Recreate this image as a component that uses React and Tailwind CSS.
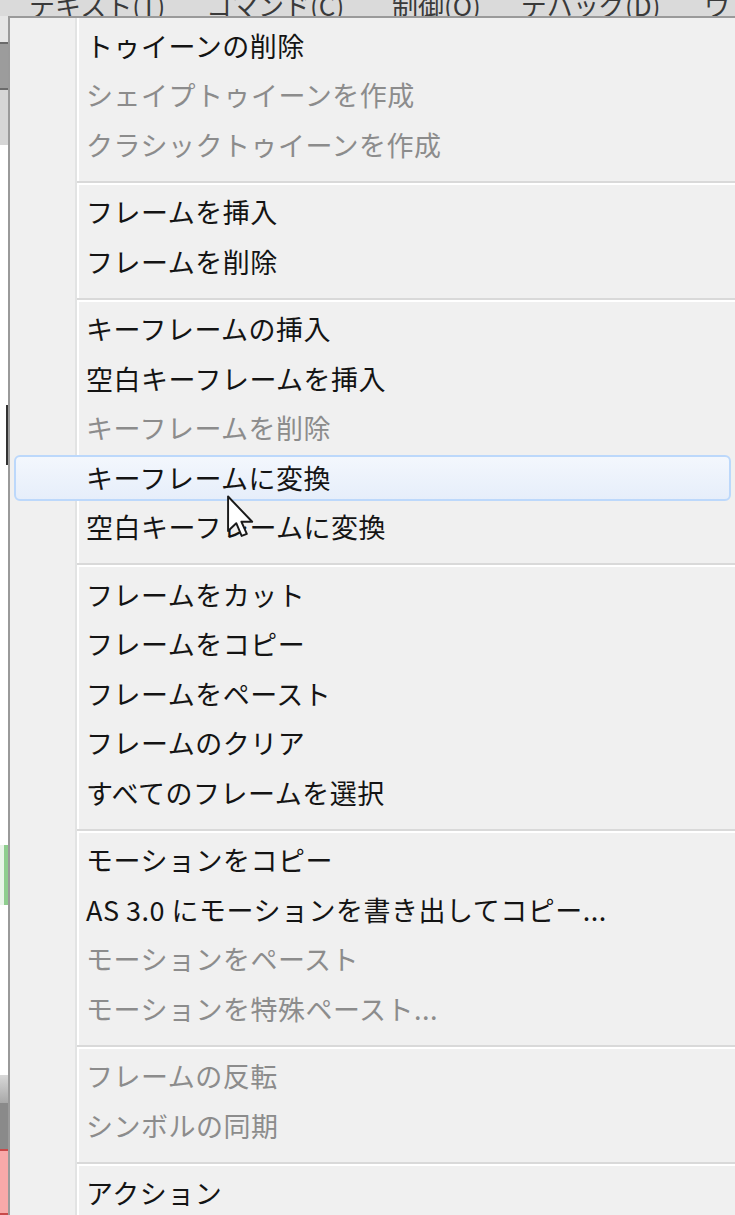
const groups = [
  [
    { label: "トゥイーンの削除" },
    { label: "シェイプトゥイーンを作成", disabled: true },
    { label: "クラシックトゥイーンを作成", disabled: true },
  ],
  [{ label: "フレームを挿入" }, { label: "フレームを削除" }],
  [
    { label: "キーフレームの挿入" },
    { label: "空白キーフレームを挿入" },
    { label: "キーフレームを削除", disabled: true },
    { label: "キーフレームに変換", active: true },
    { label: "空白キーフレームに変換" },
  ],
  [
    { label: "フレームをカット" },
    { label: "フレームをコピー" },
    { label: "フレームをペースト" },
    { label: "フレームのクリア" },
    { label: "すべてのフレームを選択" },
  ],
  [
    { label: "モーションをコピー" },
    { label: "AS 3.0 にモーションを書き出してコピー..." },
    { label: "モーションをペースト", disabled: true },
    { label: "モーションを特殊ペースト...", disabled: true },
  ],
  [
    { label: "フレームの反転", disabled: true },
    { label: "シンボルの同期", disabled: true },
  ],
  [{ label: "アクション" }],
];

const menuBar = [
  { label: "テキスト(T)", w: "w-[177px]" },
  { label: "コマンド(C)", w: "w-[186px]" },
  { label: "制御(O)", w: "w-[129px]" },
  { label: "デバッグ(D)", w: "w-[183px]" },
  { label: "ウ", w: "w-[40px]" },
];

function MenuItem({ item }) {
  return (
    <div className="h-[49.5px] px-[4px] py-[2px]">
      <div
        className={`h-full flex items-center pl-[70px] rounded-[6px] border-2 ${
          item.active
            ? "border-[#bcd8fb] bg-[linear-gradient(to_bottom,#f3f7fd,#e6eefa)]"
            : "border-transparent"
        } ${item.disabled ? "text-[#8c8c8c]" : "text-[#141414]"}`}
      >
        <span className="whitespace-nowrap">{item.label}</span>
      </div>
    </div>
  );
}

function Separator() {
  return (
    <div className="h-[18px] flex flex-col pt-[11px] pl-[67px]">
      <div className="h-[2px] bg-[#d9d9d9]" />
      <div className="h-[2px] bg-white" />
    </div>
  );
}

function Cursor() {
  return (
    <svg
      className="absolute left-[227px] top-[495px]"
      width="28"
      height="44"
      viewBox="0 0 13 20"
    >
      <path
        d="M0.5 0.5 L0.5 16.5 L4.3 12.9 L6.8 18.8 L9.2 17.8 L6.7 12.2 L11.7 12.2 Z"
        fill="#ffffff"
        stroke="#1a1a1a"
        strokeWidth="0.9"
        strokeLinejoin="round"
      />
    </svg>
  );
}

export default function App() {
  return (
    <div
      className="w-[735px] h-[1215px] overflow-hidden relative flex flex-col bg-[#f0f0f0]"
      style={{ fontFamily: '"Noto Sans CJK JP", "Noto Sans", sans-serif' }}
    >
      {/* menu bar, only its lower part shows */}
      <div className="h-[16px] shrink-0 bg-[#dadada] overflow-hidden flex items-end pl-[29px]">
        {menuBar.map((m) => (
          <div
            key={m.label}
            className={`${m.w} shrink-0 text-[26px] leading-[26px] text-[#3a3a3a] whitespace-nowrap mb-[-2px]`}
          >
            {m.label}
          </div>
        ))}
      </div>

      <div className="flex flex-1 min-h-0">
        {/* strip of the window behind the menu */}
        <div className="w-[8px] shrink-0 flex flex-col">
          <div className="h-[26px] bg-[#e6e6e6]" />
          <div className="h-[48px] bg-[#9c9c9c] border-y-2 border-[#6a6a6a]" />
          <div className="h-[55px] bg-[#d6d6d6]" />
          <div className="h-[260px] bg-white" />
          <div className="h-[60px] bg-white border-r-2 border-[#333]" />
          <div className="h-[380px] bg-white" />
          <div className="h-[60px] bg-[#e9f5e9] border-r-4 border-[#8fce8f]" />
          <div className="h-[170px] bg-white" />
          <div className="h-[28px] bg-[linear-gradient(to_bottom,#d8d8d8,#a8a8a8)]" />
          <div className="h-[46px] bg-[#8a8a8a]" />
          <div className="flex-1 bg-[#f8a9a9] border-y-2 border-[#c84a4a]" />
        </div>

        {/* context menu */}
        <div className="flex-1 border-l-2 border-t-2 border-[#9a9a9a] pt-[3px] text-[27px] tracking-[0.5px] bg-[linear-gradient(to_right,#f0f0f0_65px,#e2e3e3_65px,#e2e3e3_67px,#ffffff_67px,#ffffff_69px,#f0f0f0_69px)]">
          {groups.map((g, gi) => (
            <div key={gi}>
              {gi > 0 && <Separator />}
              {g.map((item) => (
                <MenuItem key={item.label} item={item} />
              ))}
            </div>
          ))}
        </div>
      </div>

      <Cursor />
    </div>
  );
}
